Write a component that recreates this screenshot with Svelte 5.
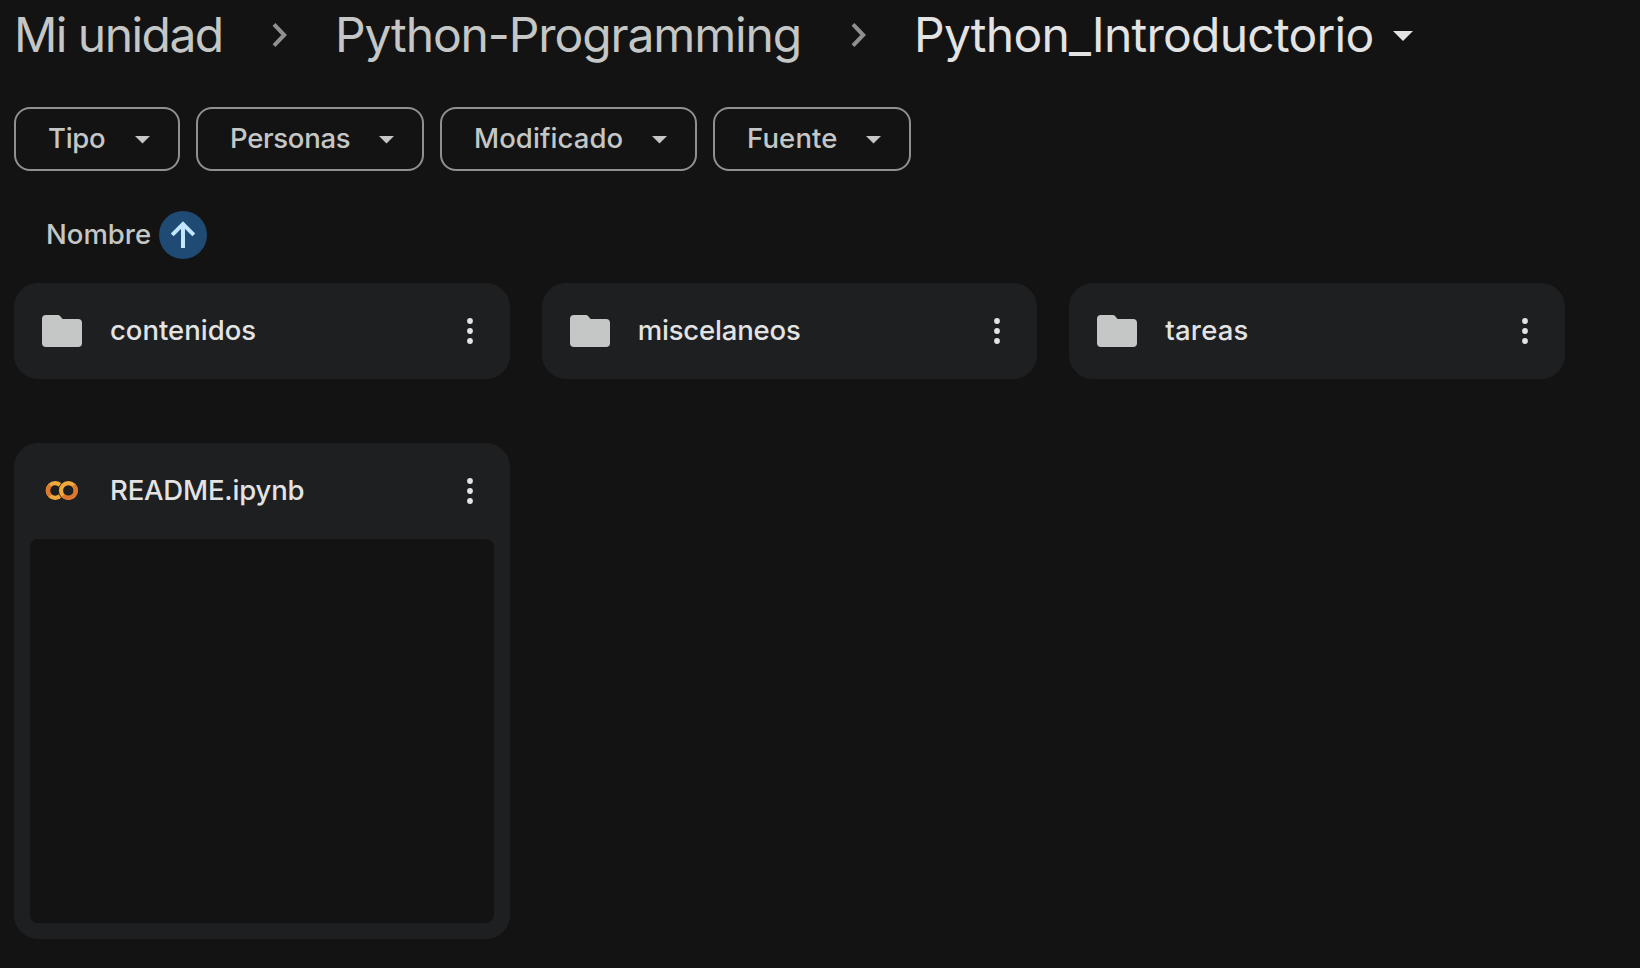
<script>
  const crumbs = [
    { label: 'Mi unidad', width: 258, spacing: -1.55 },
    { label: 'Python-Programming', width: 516, spacing: -1.12 }
  ];
  const chips = [
    { label: 'Tipo', width: 166, spacing: -0.3 },
    { label: 'Personas', width: 228, spacing: -0.3 },
    { label: 'Modificado', width: 257, spacing: 0.08 },
    { label: 'Fuente', width: 198, spacing: 0.15 }
  ];
  const folders = [
    { label: 'contenidos', spacing: 0 },
    { label: 'miscelaneos', spacing: -0.18 },
    { label: 'tareas', spacing: 0.2 }
  ];
</script>

{#snippet more()}
  <svg class="more" width="8" height="28" viewBox="0 0 8 28" fill="#e3e3e3">
    <circle cx="4" cy="4" r="2.9" /><circle cx="4" cy="14" r="2.9" /><circle cx="4" cy="24" r="2.9" />
  </svg>
{/snippet}

<main>
  <nav>
    {#each crumbs as c}
      <div class="crumb" style:width="{c.width}px">
        <span style:letter-spacing="{c.spacing}px">{c.label}</span>
      </div>
      <svg class="chevron" width="16" height="26" viewBox="0 0 16 26" fill="none" stroke="#8e918f" stroke-width="4">
        <path d="M2 2.4 12.2 13 2 23.6" />
      </svg>
    {/each}
    <div class="current">
      <span>Python_Introductorio</span>
      <svg width="20" height="10" viewBox="0 0 20 10" fill="#e3e3e3"><path d="M0 0h20L10 10z" /></svg>
    </div>
  </nav>

  <div class="chips">
    {#each chips as c}
      <button style:width="{c.width}px">
        <span style:letter-spacing="{c.spacing}px">{c.label}</span>
        <svg width="15" height="8" viewBox="0 0 15 8" fill="#c4c7c5"><path d="M0 0h15L7.5 7.6z" /></svg>
      </button>
    {/each}
  </div>

  <div class="sort">
    <span>Nombre</span>
    <div class="arrow">
      <svg width="48" height="48" viewBox="0 0 48 48" fill="none" stroke="#c2e7ff" stroke-width="4">
        <path d="M24 37V13M13.2 23.8 24 13l10.8 10.8" />
      </svg>
    </div>
  </div>

  <section class="grid">
    {#each folders as f}
      <article class="head card">
        <svg class="icon" width="48" height="48" viewBox="0 0 48 48" fill="#c4c7c5">
          <path d="M8 8H20Q21.2 8 22 9L24.6 12H40Q44 12 44 16V36Q44 40 40 40H8Q4 40 4 36V12Q4 8 8 8Z" />
        </svg>
        <span style:letter-spacing="{f.spacing}px">{f.label}</span>
        {@render more()}
      </article>
    {/each}
  </section>

  <section class="grid files">
    <article class="card file">
      <div class="head">
        <svg class="icon" width="48" height="48" viewBox="0 0 48 48" fill="none" stroke-width="4.2">
          <path d="M22.6 18.5A7.4 7.4 0 1 0 22.6 28.5" stroke="#f0a93a" />
          <path d="M12.3 18.2A7.4 7.4 0 0 0 12.3 28.7" stroke="#dc772d" />
          <circle cx="30.4" cy="23.5" r="7.4" stroke="#1e1f20" stroke-width="6" />
          <circle cx="30.4" cy="23.5" r="7.4" stroke="#f0a93a" />
          <path d="M35.65 18.25A7.4 7.4 0 1 1 25.15 28.75" stroke="#dc772d" />
        </svg>
        <span class="notebook">README.ipynb</span>
        {@render more()}
      </div>
      <div class="preview"></div>
    </article>
  </section>
</main>

<style>
  :global(body) { background: #131313; }
  main {
    box-sizing: border-box;
    width: 1640px;
    height: 968px;
    padding-left: 14px;
    overflow: hidden;
    background: #131313;
    color: #c4c7c5;
    font: 500 27.5px/40px Inter, sans-serif;
  }
  span { white-space: nowrap; }
  svg { display: block; flex: none; }
  nav { display: flex; align-items: center; height: 70px; font-size: 48px; font-weight: 400; line-height: 70px; }
  .crumb { flex: none; }
  .chevron { margin-right: 47px; }
  .current { display: flex; align-items: center; gap: 19px; color: #e3e3e3; letter-spacing: -0.75px; }
  .current svg { margin-top: 2px; }
  .chips { display: flex; gap: 16px; padding-top: 37px; }
  button {
    display: flex;
    align-items: center;
    justify-content: space-between;
    box-sizing: border-box;
    height: 64px;
    padding: 0 28.5px 2px 32px;
    border: 2px solid #8e918f;
    border-radius: 16px;
    background: none;
    color: inherit;
    font: inherit;
  }
  button svg { margin-top: 3px; }
  .sort { display: flex; align-items: center; height: 48px; margin: 40px 0 24px 32px; }
  .sort span { width: 113px; padding-bottom: 2px; }
  .arrow { border-radius: 50%; background: #1f4a73; }
  .grid { display: grid; grid-template-columns: repeat(3, 1fr); gap: 32px; width: 1551px; }
  .card { border-radius: 24px; background: #1e1f20; }
  .head { display: flex; align-items: center; height: 96px; box-sizing: border-box; padding: 0 36px 0 24px; }
  .head span { flex: 1; margin-left: 24px; padding-bottom: 2px; color: #e3e3e3; }
  .head .notebook { letter-spacing: -0.18px; }
  .files { margin-top: 64px; }
  .file { height: 496px; }
  .preview { height: 384px; margin: 0 16px; border-radius: 8px; background: #131313; }
</style>
